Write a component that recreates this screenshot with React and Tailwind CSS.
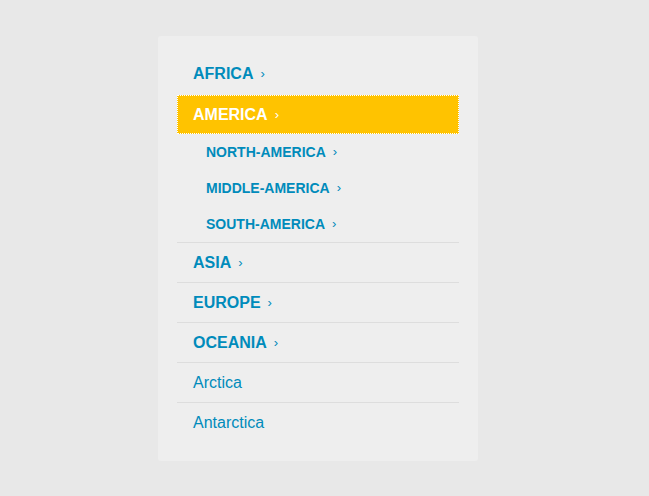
import React from "react";

const top = [
  { label: "AFRICA" },
  {
    label: "AMERICA",
    active: true,
    children: ["NORTH-AMERICA", "MIDDLE-AMERICA", "SOUTH-AMERICA"],
  },
  { label: "ASIA" },
  { label: "EUROPE" },
  { label: "OCEANIA" },
  { label: "Arctica", plain: true },
  { label: "Antarctica", plain: true },
];

function Chevron() {
  return <span className="ml-[7px] text-[13px] font-normal">›</span>;
}

export default function App() {
  return (
    <div
      className="min-h-[496px] w-full bg-[#e8e8e8] pt-[36px]"
      style={{ fontFamily: "'Liberation Sans', Arial, sans-serif" }}
    >
      <div className="ml-[158px] w-[320px] rounded-[3px] bg-[#eeeeee] px-[19px] pt-[18px] pb-[19px]">
        <ul>
          {top.map((item, i) => (
            <li key={item.label} className={i >= 2 ? "border-t border-[#dddddd]" : ""}>
              <a
                className={
                  "flex items-center pl-[16px] text-[16px] " +
                  (item.active
                    ? "mt-[1px] h-[39px] bg-[#ffc300] text-white outline-1 outline-dotted outline-white -outline-offset-1"
                    : i >= 2
                    ? "h-[39px] text-[#008bbb]"
                    : "h-[40px] text-[#008bbb]") +
                  (item.plain ? " font-normal" : " font-bold")
                }
              >
                {item.label}
                {!item.plain && <Chevron />}
              </a>
              {item.children && (
                <ul>
                  {item.children.map((c) => (
                    <li key={c}>
                      <a className="flex h-[36px] items-center pl-[29px] text-[14px] font-bold text-[#008bbb]">
                        {c}
                        <Chevron />
                      </a>
                    </li>
                  ))}
                </ul>
              )}
            </li>
          ))}
        </ul>
      </div>
    </div>
  );
}
